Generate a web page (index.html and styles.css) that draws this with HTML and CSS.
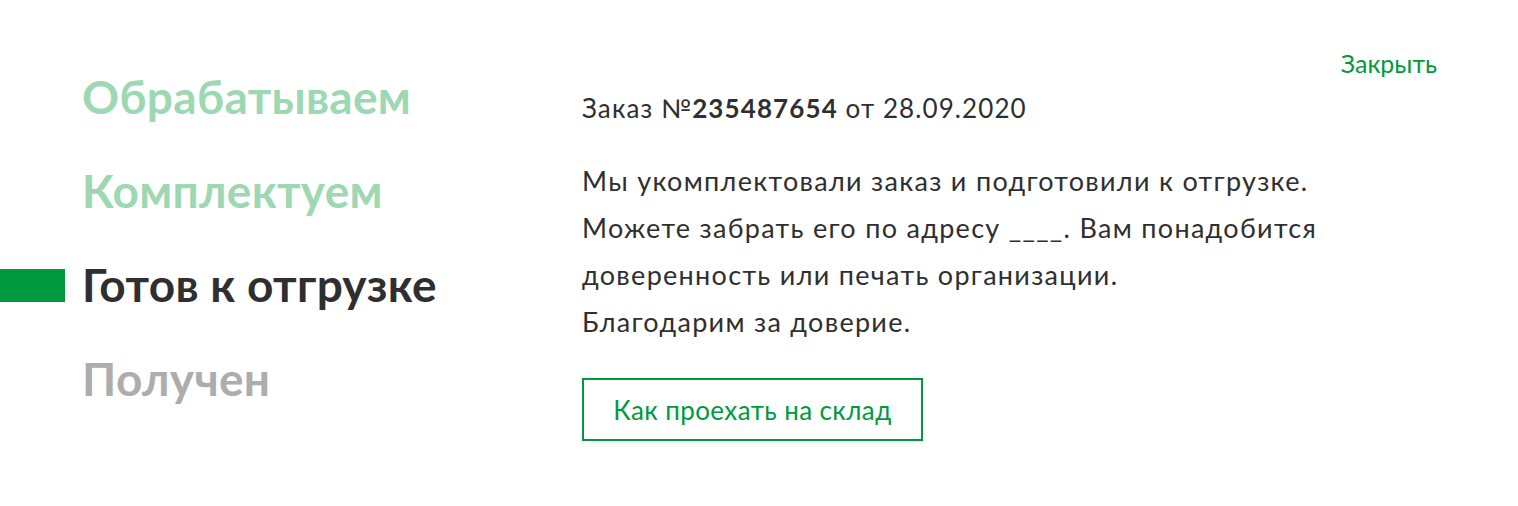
FILE: index.html
```html
<!DOCTYPE html>
<html lang="ru">
<head>
<meta charset="utf-8">
<link rel="stylesheet" href="styles.css">
</head>
<body>
<div class="page">
  <ul class="steps">
    <li class="step step-done"><span class="marker"></span><span class="label">Обрабатываем</span></li>
    <li class="step step-done"><span class="marker"></span><span class="label">Комплектуем</span></li>
    <li class="step step-active"><span class="marker"></span><span class="label">Готов к отгрузке</span></li>
    <li class="step step-next"><span class="marker"></span><span class="label">Получен</span></li>
  </ul>
  <div class="content">
    <div class="close-row"><a class="close">Закрыть</a></div>
    <p class="order">Заказ №<b>235487654</b> от 28.09.2020</p>
    <p class="text">Мы укомплектовали заказ и подготовили к отгрузке.<br>Можете забрать его по адресу ____. Вам понадобится<br>доверенность или печать организации.<br>Благодарим за доверие.</p>
    <a class="btn">Как проехать на склад</a>
  </div>
</div>
</body>
</html>
```
FILE: styles.css
```css
* { box-sizing: border-box; }
html, body { margin: 0; padding: 0; background: #fff; }
body { font-family: "Lato", "Noto Sans", sans-serif; color: #2f2f2f; }
.page { display: flex; width: 1518px; height: 506px; }
.steps { list-style: none; margin: 0; padding: 50px 0 0 0; width: 582px; display: flex; flex-direction: column; }
.step { display: flex; align-items: center; gap: 17px; height: 94px; }
.marker { width: 65px; height: 33px; flex: none; }
.label { font-size: 46px; font-weight: 700; line-height: 50px; letter-spacing: 0.3px; }
.step-done .label { color: #9dd8b3; }
.step-active .label { color: #2f2f2f; }
.step-active .marker { background: #009a3e; }
.step-next .label { color: #adadad; }
.content { flex: 1; padding: 48px 81px 0 0; display: flex; flex-direction: column; align-items: flex-start; }
.close-row { align-self: stretch; display: flex; justify-content: flex-end; }
.close { color: #009a3e; font-size: 25px; line-height: 30px; }
.order { margin: 15px 0 0 0; font-size: 26px; line-height: 30px; letter-spacing: 1.1px; }
.order b { font-weight: 700; }
.text { margin: 34px 0 0 0; font-size: 27px; line-height: 47px; letter-spacing: 1.3px; }
.btn { margin-top: 33px; display: flex; align-items: center; justify-content: center; width: 341px; height: 63px; border: 2px solid #009a3e; color: #009a3e; font-size: 26px; letter-spacing: 0.4px; }
```
